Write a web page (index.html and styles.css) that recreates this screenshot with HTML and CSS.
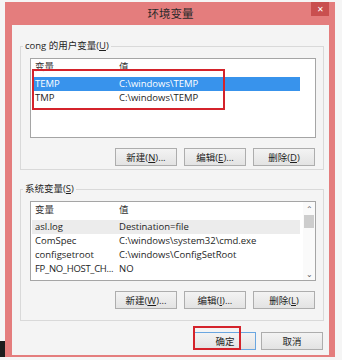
FILE: index.html
```html
<!DOCTYPE html>
<html lang="zh-CN">
<head>
  <meta charset="UTF-8">
  <title>环境变量</title>
  <link rel="stylesheet" href="styles.css">
</head>
<body>
  <div class="edge"><div class="edge-mark"></div></div>
  <div class="window">
    <div class="titlebar">
      <span></span>
      <div class="title">环境变量</div>
      <div class="close">&#x2715;</div>
    </div>
    <div class="content">
      <fieldset class="group group-user">
        <legend>cong 的用户变量(<u>U</u>)</legend>
        <div class="list">
          <div class="rows">
            <div class="row head"><span class="c1">变量</span><span class="c2">值</span></div>
            <div class="row selected"><span class="c1">TEMP</span><span class="c2">C:\windows\TEMP</span></div>
            <div class="row"><span class="c1">TMP</span><span class="c2">C:\windows\TEMP</span></div>
          </div>
        </div>
        <div class="buttons">
          <button>新建(<u>N</u>)...</button>
          <button>编辑(<u>E</u>)...</button>
          <button>删除(<u>D</u>)</button>
        </div>
      </fieldset>

      <fieldset class="group group-system">
        <legend>系统变量(<u>S</u>)</legend>
        <div class="list">
          <div class="rows">
            <div class="row head"><span class="c1">变量</span><span class="c2">值</span></div>
            <div class="row inactive"><span class="c1">asl.log</span><span class="c2">Destination=file</span></div>
            <div class="row"><span class="c1">ComSpec</span><span class="c2">C:\windows\system32\cmd.exe</span></div>
            <div class="row"><span class="c1">configsetroot</span><span class="c2">C:\windows\ConfigSetRoot</span></div>
            <div class="row"><span class="c1 tight">FP_NO_HOST_CH...</span><span class="c2">NO</span></div>
          </div>
          <div class="scrollbar">
            <div class="arrow">&#x2303;</div>
            <div class="thumb"></div>
            <div class="track"></div>
            <div class="arrow">&#x2304;</div>
          </div>
        </div>
        <div class="buttons">
          <button>新建(<u>W</u>)...</button>
          <button>编辑(<u>I</u>)...</button>
          <button>删除(<u>L</u>)</button>
        </div>
      </fieldset>

      <div class="buttons footer">
        <button class="default">确定</button>
        <button>取消</button>
      </div>
    </div>
  </div>

  <!-- red marks drawn over the screenshot -->
  <div class="mark mark-user"></div>
  <div class="mark mark-ok"></div>
</body>
</html>
```

FILE: styles.css
```css
body {
  margin: 0;
  width: 342px;
  height: 360px;
  display: flex;
  position: relative;
  background: #f5f5f5;
  font-family: "Open Sans", "Noto Sans CJK SC", sans-serif;
  font-size: 9.5px;
  color: #1e1e1e;
  overflow: hidden;
}
.edge {
  width: 5px;
  display: flex;
  flex-direction: column;
  justify-content: flex-end;
  padding-bottom: 3px;
}
.edge-mark {
  height: 16px;
  background: #1c1c1c;
}
.window {
  box-sizing: border-box;
  margin-top: 2px;
  width: 330px;
  height: 355px;
  background: #e47d7d;
  padding: 0 6px 2px 7px;
  display: flex;
  flex-direction: column;
}
.titlebar {
  height: 23px;
  display: grid;
  grid-template-columns: 18px 1fr 18px;
  flex-shrink: 0;
}
.title {
  text-align: center;
  line-height: 22px;
  font-size: 11.5px;
  color: #2a2a2a;
  font-family: "Noto Sans CJK SC", sans-serif;
}
.close {
  height: 14px;
  background: #c94f4f;
  color: #fff;
  font-size: 8px;
  line-height: 14px;
  text-align: center;
}
.content {
  flex: 1;
  background: #f4f4f4;
  padding: 14px 5px 0 8px;
}
.group {
  margin: 0;
  min-width: 0;
  padding: 0 7px 3px 9px;
  border: 1px solid #d9d9d9;
}
.group-system {
  margin-top: 12px;
  padding-bottom: 11px;
}
legend {
  margin-left: -7px;
  padding: 0 2px;
  line-height: 14px;
}
.list {
  margin-top: 5px;
  height: 80px;
  box-sizing: border-box;
  border: 1px solid #a5a5a5;
  background: #fff;
  display: flex;
  overflow: hidden;
}
.rows {
  flex: 1;
  padding-left: 1px;
}
.row {
  width: 268px;
  height: 14px;
  line-height: 14px;
  display: flex;
  white-space: nowrap;
}
.row.head {
  height: 18px;
  padding-top: 1px;
  box-sizing: border-box;
  color: #333;
}
.row.selected {
  background: #3893ec;
  color: #fff;
}
.row.inactive {
  background: #ececec;
}
.c1 {
  width: 84px;
  flex-shrink: 0;
  padding-left: 3px;
  box-sizing: border-box;
}
.c1.tight {
  letter-spacing: -0.3px;
}
.c2 {
  flex: 1;
  padding-left: 3px;
}
.scrollbar {
  width: 12px;
  display: flex;
  flex-direction: column;
  align-items: center;
  background: #fafafa;
}
.arrow {
  height: 13px;
  line-height: 13px;
  font-size: 8px;
  color: #606060;
}
.thumb {
  width: 10px;
  height: 13px;
  background: #cdcdcd;
}
.track {
  flex: 1;
}
.buttons {
  display: flex;
  justify-content: flex-end;
  gap: 7px;
  margin-top: 10px;
  padding-right: 1px;
}
button {
  width: 62px;
  height: 18px;
  padding: 0;
  border: 1px solid #adadad;
  background: linear-gradient(#f3f3f3, #e3e3e3);
  font-family: "Open Sans", "Noto Sans CJK SC", sans-serif;
  font-size: 9.5px;
  color: #1e1e1e;
}
.footer {
  margin-top: 11px;
  gap: 5px;
}
button.default {
  border-color: #6aa6e0;
}
.mark {
  position: absolute;
  border: 2px solid #d4232b;
  box-sizing: border-box;
}
.mark-user {
  left: 32px;
  top: 69px;
  width: 193px;
  height: 41px;
}
.mark-ok {
  left: 193px;
  top: 326px;
  width: 48px;
  height: 24px;
}
```
